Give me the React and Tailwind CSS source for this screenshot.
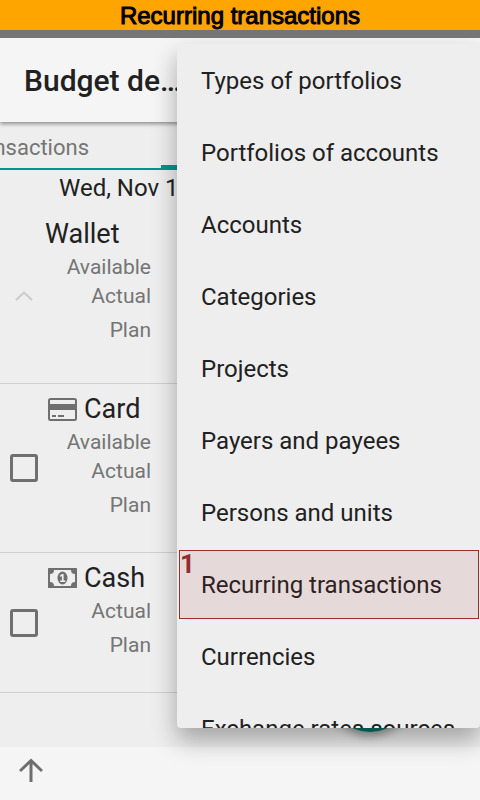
import React from "react";

const menuItems = [
  "Types of portfolios",
  "Portfolios of accounts",
  "Accounts",
  "Categories",
  "Projects",
  "Payers and payees",
  "Persons and units",
  "Recurring transactions",
  "Currencies",
  "Exchange rates sources",
];

function CardIcon() {
  return (
    <svg width="29" height="23" viewBox="0 0 29 23" fill="none" aria-hidden="true">
      <rect x="1" y="1" width="27" height="21" rx="1.5" stroke="#6f6f6f" strokeWidth="2" />
      <rect x="1" y="6" width="27" height="6" fill="#6f6f6f" />
      <path d="M4 18h4M10 18h6" stroke="#6f6f6f" strokeWidth="2" />
    </svg>
  );
}

function CashIcon() {
  return (
    <svg width="29" height="20" viewBox="0 0 29 20" aria-hidden="true">
      <rect width="29" height="20" rx="0.5" fill="#6f6f6f" />
      <path d="M6 2h17a4 4 0 0 0 4 4v8a4 4 0 0 0-4 4H6a4 4 0 0 0-4-4V6a4 4 0 0 0 4-4z" fill="#eee" />
      <ellipse cx="14.5" cy="10" rx="5" ry="6.5" fill="#6f6f6f" />
      <path d="M12 7.5l2-1.5h1.6v6.4h1.7V14h-5.2v-1.6h1.8V8.2L12 8.8z" fill="#eee" />
    </svg>
  );
}

function AccountRow({ name, icon, lines, lead, last }) {
  return (
    <section className="flex items-stretch border-b border-[#cfcfcf]">
      <div className="flex w-12 shrink-0 items-center justify-center">{lead}</div>
      <div className={last}>
        <h2 className="flex h-[38px] items-center gap-[7px] text-[27px] leading-10 text-[#212121]">
          {icon}
          {name}
        </h2>
        <ul className="w-[103px] text-right text-[21px] text-[#757575]">
          {lines.map((line) => (
            <li key={line} className={line === "Plan" ? "leading-[39px]" : "leading-[29px]"}>
              {line}
            </li>
          ))}
        </ul>
      </div>
    </section>
  );
}

function Tick({ label }) {
  return (
    <input
      type="checkbox"
      aria-label={label}
      className="size-7 appearance-none rounded-[3px] border-3 border-[#6f6f6f]"
    />
  );
}

export default function App() {
  return (
    <div className="relative flex min-h-screen flex-col overflow-hidden bg-[#eeeeee] font-[Roboto,sans-serif] text-[#212121]">
      <div className="relative z-20">
        <h1 className="h-[30px] bg-[#ffa500] text-center font-['Liberation_Sans',sans-serif] text-2xl leading-8 text-black [-webkit-text-stroke:1px_black]">
          Recurring transactions
        </h1>
        <div className="h-2 bg-[#757575]" />
      </div>

      <header className="relative flex h-[84px] items-center bg-[#f5f5f5] px-6 shadow-[0_2px_4px_rgba(0,0,0,0.4)]">
        <div className="text-[30px] font-medium whitespace-nowrap">Budget de…</div>
      </header>

      <nav className="flex h-12 border-b-2 border-[#009688] text-[22px] text-[#757575]">
        <button className="flex w-[161px] items-center justify-end pr-[72px] pt-1 whitespace-nowrap">Transactions</button>
        <div className="flex-1 border-b-3 border-[#009688]" />
      </nav>

      <main className="flex-1">
        <div className="h-[39px] pl-[59px] text-2xl leading-9">Wed, Nov 1</div>
        <AccountRow
          name="Wallet"
          lines={["Available", "Actual", "Plan"]}
          last="-ml-[3px] pt-1.5 pb-[33px] [&>ul]:w-[106px]"
          lead={
            <button aria-label="Collapse">
              <svg width="18" height="10" viewBox="0 0 18 10" fill="none" stroke="#cccccc" strokeWidth="2">
                <path d="M1 9l8-7.5L17 9" />
              </svg>
            </button>
          }
        />
        <AccountRow
          name="Card"
          icon={<CardIcon />}
          lines={["Available", "Actual", "Plan"]}
          last="pt-1.5 pb-[27px]"
          lead={<Tick label="Card" />}
        />
        <AccountRow
          name="Cash"
          icon={<CashIcon />}
          lines={["Actual", "Plan"]}
          last="pt-1.5 pb-[27px]"
          lead={<Tick label="Cash" />}
        />
      </main>

      <footer className="flex h-[53px] items-center bg-[#f5f5f5] px-[19px]">
        <button aria-label="Up" className="pb-2">
          <svg width="24" height="24" viewBox="0 0 24 24" fill="none" stroke="#6f6f6f" strokeWidth="3">
            <path d="M12 24V2.5M1 13L12 2.5L23 13" />
          </svg>
        </button>
      </footer>

      <button
        aria-label="Add"
        className="absolute right-[70px] bottom-[68px] size-20 rounded-full bg-[#00796b] shadow-[0_4px_10px_rgba(0,0,0,0.35)]"
      />

      <div
        role="menu"
        className="absolute top-11 right-0 bottom-[72px] left-[177px] z-10 flex flex-col overflow-hidden rounded bg-[#eeeeee] pt-px shadow-[0_12px_24px_rgba(0,0,0,0.32)]"
      >
        {menuItems.map((item) => (
          <button
            key={item}
            role="menuitem"
            className="relative h-[72px] shrink-0 px-6 text-left text-2xl whitespace-nowrap"
          >
            {item}
            {item === "Recurring transactions" && (
              <span className="absolute top-px right-px bottom-0.5 left-0.5 border border-[#a52a2a] bg-[#a52a2a]/10 text-[26px] leading-[26px] font-bold text-[#932c2f]">
                1
              </span>
            )}
          </button>
        ))}
      </div>
    </div>
  );
}
